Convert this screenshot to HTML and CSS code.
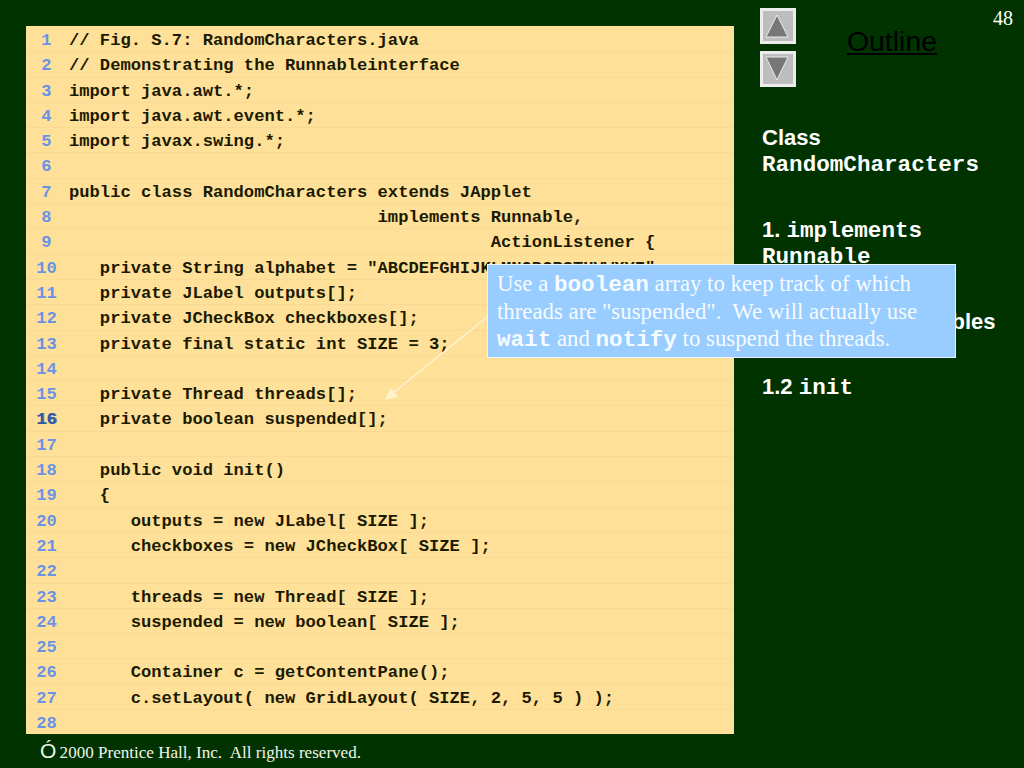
FILE: index.html
```html
<!DOCTYPE html>
<html lang="en">
<head>
<meta charset="utf-8">
<title>RandomCharacters</title>
<link rel="stylesheet" href="styles.css">
</head>
<body>
<div class="slide">
  <div class="content">
    <div class="panel">
      <div class="row"><span class="num">1</span><span class="code">// Fig. S.7: RandomCharacters.java</span></div>
      <div class="row"><span class="num">2</span><span class="code">// Demonstrating the Runnableinterface</span></div>
      <div class="row"><span class="num">3</span><span class="code">import java.awt.*;</span></div>
      <div class="row"><span class="num">4</span><span class="code">import java.awt.event.*;</span></div>
      <div class="row"><span class="num">5</span><span class="code">import javax.swing.*;</span></div>
      <div class="row"><span class="num">6</span><span class="code"></span></div>
      <div class="row"><span class="num">7</span><span class="code">public class RandomCharacters extends JApplet</span></div>
      <div class="row"><span class="num">8</span><span class="code">                              implements Runnable,</span></div>
      <div class="row"><span class="num">9</span><span class="code">                                         ActionListener {</span></div>
      <div class="row"><span class="num">10</span><span class="code">   private String alphabet = "ABCDEFGHIJKLMNOPQRSTUVWXYZ";</span></div>
      <div class="row"><span class="num">11</span><span class="code">   private JLabel outputs[];</span></div>
      <div class="row"><span class="num">12</span><span class="code">   private JCheckBox checkboxes[];</span></div>
      <div class="row"><span class="num">13</span><span class="code">   private final static int SIZE = 3;</span></div>
      <div class="row"><span class="num">14</span><span class="code"></span></div>
      <div class="row"><span class="num">15</span><span class="code">   private Thread threads[];</span></div>
      <div class="row"><span class="num num-hi">16</span><span class="code">   private boolean suspended[];</span></div>
      <div class="row"><span class="num">17</span><span class="code"></span></div>
      <div class="row"><span class="num">18</span><span class="code">   public void init()</span></div>
      <div class="row"><span class="num">19</span><span class="code">   {</span></div>
      <div class="row"><span class="num">20</span><span class="code">      outputs = new JLabel[ SIZE ];</span></div>
      <div class="row"><span class="num">21</span><span class="code">      checkboxes = new JCheckBox[ SIZE ];</span></div>
      <div class="row"><span class="num">22</span><span class="code"></span></div>
      <div class="row"><span class="num">23</span><span class="code">      threads = new Thread[ SIZE ];</span></div>
      <div class="row"><span class="num">24</span><span class="code">      suspended = new boolean[ SIZE ];</span></div>
      <div class="row"><span class="num">25</span><span class="code"></span></div>
      <div class="row"><span class="num">26</span><span class="code">      Container c = getContentPane();</span></div>
      <div class="row"><span class="num">27</span><span class="code">      c.setLayout( new GridLayout( SIZE, 2, 5, 5 ) );</span></div>
      <div class="row row-last"><span class="num">28</span><span class="code"></span></div>
    </div>
    <div class="side">
      <div class="side-head">
        <div class="nav">
          <div class="nav-btn">
            <svg width="30" height="30" viewBox="0 0 30 30"><polygon points="14,4 25,26 3,26" fill="#777777" stroke="#ececec" stroke-width="1"/></svg>
          </div>
          <div class="nav-btn">
            <svg width="30" height="30" viewBox="0 0 30 30"><polygon points="3,3 25,3 14,26" fill="#777777" stroke="#ececec" stroke-width="1"/></svg>
          </div>
        </div>
        <div class="outline">Outline</div>
        <div class="page-num">48</div>
      </div>
      <div class="notes">
        <p>Class<br><span class="mono">RandomCharacters</span></p>
        <p>1. <span class="mono">implements<br>Runnable</span></p>
        <p>1.1&nbsp; Instance variables</p>
        <p>1.2 <span class="mono">init</span></p>
      </div>
    </div>
  </div>
  <div class="footer"><span class="copy">Ó</span> 2000 Prentice Hall, Inc.  All rights reserved.</div>

  <svg class="arrow" width="120" height="100" viewBox="0 0 120 100">
    <line x1="104" y1="11" x2="10" y2="87" stroke="#fff3cf" stroke-width="1.6"/>
    <polygon points="2,94 8,82 15,91" fill="#fff3cf"/>
  </svg>
  <div class="callout">Use a <span class="mono">boolean</span> array to keep track of which<br>threads are "suspended".  We will actually use<br><span class="mono">wait</span> and <span class="mono">notify</span> to suspend the threads.</div>
</div>
</body>
</html>
```
FILE: styles.css
```css
* { box-sizing: border-box; }
html, body { margin: 0; padding: 0; }
body { background: #003300; }
.slide {
  position: relative;
  width: 1024px;
  height: 768px;
  overflow: hidden;
  background: #003300;
  color: #ffffff;
  display: flex;
  flex-direction: column;
}
.content { display: flex; padding-left: 26px; flex: none; }
.panel {
  width: 708px;
  height: 708px;
  margin-top: 26px;
  padding-top: 1px;
  background: #ffe099;
  overflow: hidden;
}
.row {
  display: flex;
  align-items: flex-start;
  height: 25.3px;
  border-bottom: 1px solid #f9da94;
  font: bold 17.15px/28px "Liberation Mono", monospace;
}
.row-last { border-bottom: 0; }
.num { width: 41px; margin-right: 2px; flex: none; text-align: center; color: #6a93e6; }
.num-hi { color: #33589c; text-shadow: 1px 0 0 #5f8fe0; }
.code { white-space: pre; color: #1a1a00; }
.side { width: 290px; flex: none; padding: 8px 11px 0 26px; }
.side-head { display: flex; align-items: flex-start; height: 79px; }
.nav { display: flex; flex-direction: column; gap: 7px; }
.nav-btn {
  width: 36px;
  height: 36px;
  border: 3px solid #ececec;
  background: #bdbdbd;
}
.nav-btn svg { display: block; }
.outline {
  margin: 17px 0 0 51px;
  font: 28.4px/32px "Liberation Sans", sans-serif;
  color: #000000;
  text-decoration: underline;
}
.page-num {
  margin: 0 0 0 auto;
  font: 20px/20px "Liberation Serif", serif;
}
.notes {
  margin: 38px 0 0 2px;
  font: bold 22px/26.2px "Liberation Sans", sans-serif;
}
.notes p { margin: 0 0 39.4px; white-space: nowrap; }
.mono { font-family: "Liberation Mono", monospace; font-weight: bold; font-size: 22.6px; line-height: 0; }
.footer {
  margin: 6px 0 0 40px;
  font: 17.07px/22px "Liberation Serif", serif;
  white-space: pre;
  color: #f0f5e8;
}
.copy { font: 21px/22px "Liberation Sans", sans-serif; margin-right: -1px; }
.callout {
  position: absolute;
  left: 487px;
  top: 264px;
  width: 469px;
  height: 94px;
  padding: 5px 0 0 9px;
  background: #99ccff;
  border: 1px solid #e8f4ff;
  font: 22.8px/27.5px "Liberation Serif", serif;
  white-space: pre;
  color: #f6fbff;
}
.arrow { position: absolute; left: 383px; top: 306px; }
```
